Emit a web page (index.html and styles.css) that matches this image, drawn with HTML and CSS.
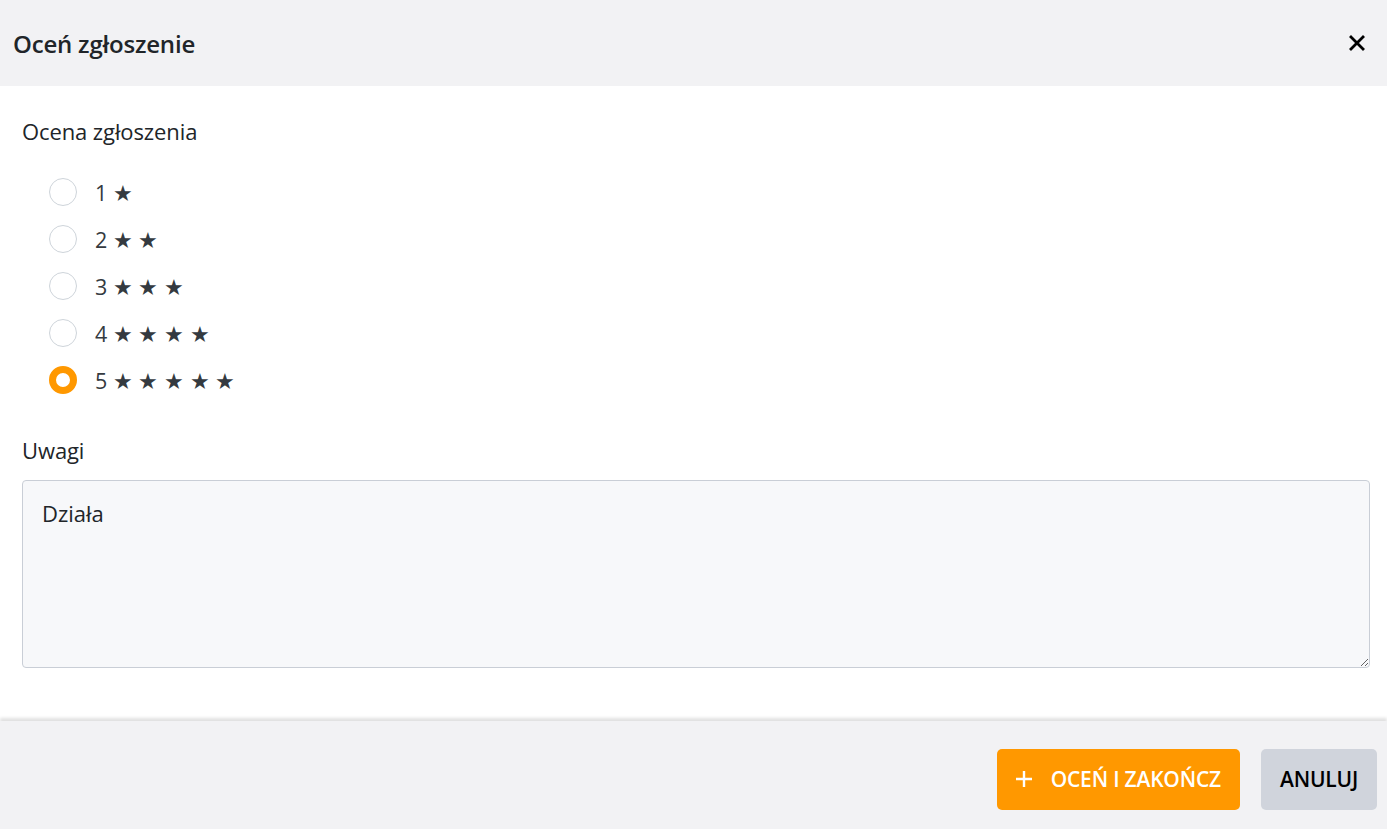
FILE: index.html
```html
<!DOCTYPE html>
<html lang="pl">
<head>
<meta charset="UTF-8">
<meta name="viewport" content="width=device-width, initial-scale=1.0">
<title>Oceń zgłoszenie</title>
<link rel="stylesheet" href="styles.css">
</head>
<body>

<div class="modal">
    <div class="modal-header">
        <h1>Oceń zgłoszenie</h1>
        <button class="close-btn" aria-label="Zamknij">
            <svg width="16" height="16" viewBox="0 0 16 16">
                <path d="M2 2 L14 14 M14 2 L2 14" stroke="#000" stroke-width="2.8" stroke-linecap="square"/>
            </svg>
        </button>
    </div>

    <div class="modal-body">
        <div class="field-label">Ocena zgłoszenia</div>
        <div class="radio-list">
            <label class="radio-row"><input type="radio" name="rating" value="1"><span>1 ★</span></label>
            <label class="radio-row"><input type="radio" name="rating" value="2"><span>2 ★ ★</span></label>
            <label class="radio-row"><input type="radio" name="rating" value="3"><span>3 ★ ★ ★</span></label>
            <label class="radio-row"><input type="radio" name="rating" value="4"><span>4 ★ ★ ★ ★</span></label>
            <label class="radio-row"><input type="radio" name="rating" value="5" checked><span>5 ★ ★ ★ ★ ★</span></label>
        </div>

        <div class="field-label notes-label">Uwagi</div>
        <textarea class="notes">Działa</textarea>
    </div>

    <div class="modal-footer">
        <button class="button button-primary">
            <svg width="16" height="16" viewBox="0 0 16 16">
                <path d="M8 0 V16 M0 8 H16" stroke="#fff" stroke-width="2.4"/>
            </svg>
            OCEŃ I ZAKOŃCZ
        </button>
        <button class="button button-secondary">ANULUJ</button>
    </div>
</div>

</body>
</html>
```

FILE: styles.css
```css
body {
    margin: 0;
    padding: 0;
    background-color: #fff;
    color: #212529;
    font-family: "Open Sans", "Noto Sans", Arial, sans-serif;
}
.modal {
    display: flex;
    flex-direction: column;
    height: 829px;
}
.modal-header {
    height: 86px;
    flex-shrink: 0;
    background-color: #f2f2f4;
    display: flex;
    justify-content: space-between;
    align-items: center;
    padding: 0 22px 0 13px;
}
.modal-header h1 {
    margin: 0;
    font-size: 24px;
    font-weight: 600;
    color: #212529;
    letter-spacing: -0.2px;
}
.close-btn {
    background: none;
    border: none;
    padding: 0;
    cursor: pointer;
    display: flex;
}
.modal-body {
    flex: 1;
    padding: 0 17px 0 22px;
}
.field-label {
    font-size: 22px;
    margin-top: 32px;
    line-height: 26px;
    letter-spacing: -0.1px;
}
.radio-list {
    display: flex;
    flex-direction: column;
    gap: 19px;
    margin-top: 34px;
    padding-left: 27px;
}
.radio-row {
    display: flex;
    align-items: center;
    gap: 18px;
    font-size: 21.5px;
    height: 28px;
    cursor: pointer;
    color: #343a40;
}
.radio-row input {
    appearance: none;
    -webkit-appearance: none;
    margin: 0;
    width: 28px;
    height: 28px;
    border-radius: 50%;
    border: 1px solid #ced4da;
    background-color: #fff;
}
.radio-row input:checked {
    border: 7px solid #ff9800;
    background-color: #fff;
}
.notes-label {
    margin-top: 43px;
}
.notes {
    display: block;
    box-sizing: border-box;
    width: 100%;
    height: 188px;
    margin-top: 17px;
    padding: 17px 19px;
    background-color: #f7f8fa;
    border: 1px solid #c9ced6;
    border-radius: 4px;
    font-family: inherit;
    font-size: 22px;
    line-height: 30px;
    color: #212529;
    resize: vertical;
}
.modal-footer {
    height: 108px;
    box-sizing: border-box;
    flex-shrink: 0;
    background-color: #f2f2f4;
    box-shadow: 0 -3px 3px rgba(0, 0, 0, 0.12);
    display: flex;
    justify-content: flex-end;
    align-items: center;
    gap: 21px;
    padding: 8px 10px 0;
}
.button {
    height: 61px;
    border: none;
    border-radius: 5px;
    font-family: inherit;
    font-size: 21px;
    font-weight: 600;
    cursor: pointer;
    display: flex;
    align-items: center;
    letter-spacing: -0.2px;
}
.button-primary {
    background-color: #ff9800;
    color: #fff;
    padding: 0 19px;
    gap: 19px;
}
.button-secondary {
    background-color: #d0d4dc;
    color: #000;
    padding: 0 19px;
}
```
